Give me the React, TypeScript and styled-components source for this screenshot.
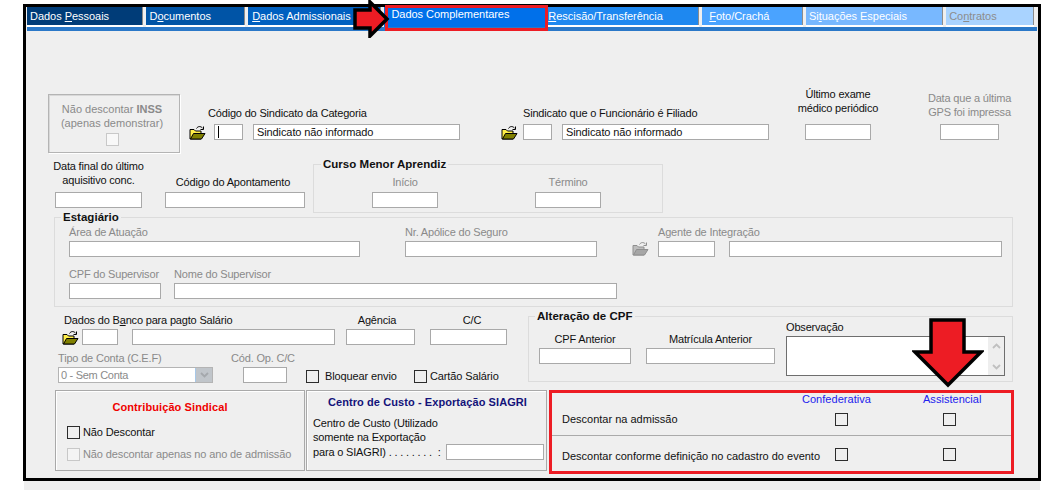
import React from 'react';
import styled, { createGlobalStyle } from 'styled-components';

const GlobalStyle = createGlobalStyle`
  html, body {
    margin: 0;
    padding: 0;
    background: #fff;
    overflow: hidden;
  }

  body {
    font-family: "Liberation Sans", Arial, sans-serif;
    font-size: 11px;
    letter-spacing: -0.1px;
    color: #111;
  }
`;

const Page = styled.div`
  position: relative;
  width: 1061px;
  height: 490px;
  padding: 4px 0 0 23px;
  box-sizing: border-box;
`;

const Win = styled.div`
  box-sizing: border-box;
  width: 1018px;
  height: 477px;
  border: 3px solid #000;
  background: #efefef;
`;

const BelowStrip = styled.div`
  width: 1016px;
  height: 9px;
  margin-left: 1px;
  background: #efefef;
`;

const TabBar = styled.div`
  display: flex;
  height: 24px;
  box-sizing: border-box;
  width: 1010px;
  margin-left: 1px;
  border-bottom: 4px solid #2a78c8;
`;

const Tab = styled.div<{ $w: number; $bg: string; $fg?: string; $pl?: number; $active?: boolean; }>`
  box-sizing: border-box;
  width: ${({ $w, }) => $w}px;
  margin-right: ${({ $active, }) => ($active ? 0 : 3)}px;
  height: ${({ $active, }) => ($active ? 20 : 18)}px;
  padding: ${({ $active, }) => ($active ? 0 : 2)}px 0 0 ${({ $pl, }) => $pl ?? 3}px;
  background: ${({ $bg, }) => $bg};
  color: ${({ $fg, }) => $fg || '#fff'};
  line-height: 14px;
  letter-spacing: -0.03px;
  white-space: nowrap;
  border-right: ${({ $active, }) => ($active ? 'none' : '1px solid #8c8c8c')};
  box-shadow: ${({ $active, }) => ($active ? 'none' : '0 2px 0 #fff')};
`;

const ActiveTabFrame = styled.div`
  position: absolute;
  left: 385px;
  top: 5px;
  width: 163px;
  height: 26px;
  box-sizing: border-box;
  border: 3px solid #ed1c24;
`;

const Row = styled.div<{ $top?: number; $h?: number; $start?: boolean; }>`
  display: flex;
  align-items: ${({ $start, }) => ($start ? 'flex-start' : 'flex-end')};
  margin-top: ${({ $top, }) => $top || 0}px;
  height: ${({ $h, }) => ($h ? `${$h}px` : 'auto')};
`;

const Form = styled.div`
  padding-left: 22px;
`;

const Field = styled.div<{ $w?: number; $ml?: number; $mb?: number; $center?: boolean; }>`
  display: flex;
  flex-direction: column;
  align-items: ${({ $center, }) => ($center ? 'center' : 'flex-start')};
  flex: none;
  width: ${({ $w, }) => ($w ? `${$w}px` : 'auto')};
  margin-left: ${({ $ml, }) => $ml || 0}px;
  margin-bottom: ${({ $mb, }) => $mb || 0}px;
`;

const Label = styled.div<{ $gap?: number; $ml?: number; $muted?: boolean; }>`
  line-height: 14px;
  letter-spacing: -0.18px;
  white-space: nowrap;
  text-align: center;
  margin-left: ${({ $ml, }) => $ml || 0}px;
  margin-bottom: ${({ $gap, }) => $gap ?? 3}px;
  color: ${({ $muted, }) => ($muted ? '#8a8a8a' : '#111')};
`;

const Input = styled.div<{ $w?: number; $ml?: number; }>`
  box-sizing: border-box;
  flex: none;
  position: relative;
  width: ${({ $w, }) => ($w ? `${$w}px` : '100%')};
  height: 16px;
  margin-left: ${({ $ml, }) => $ml || 0}px;
  padding-left: 3px;
  background: #fff;
  border: 1px solid #a9a9a9;
  line-height: 14px;
  white-space: nowrap;
`;

const Caret = styled.span`
  position: absolute;
  left: 3px;
  top: 1px;
  width: 1px;
  height: 12px;
  background: #000;
`;

const InputRow = styled.div`
  display: flex;
  align-items: center;
`;

const InssBox = styled.div`
  box-sizing: border-box;
  flex: none;
  width: 132px;
  height: 59px;
  padding: 7px 4px 0 0;
  border: 1px solid #b4b4b4;
  box-shadow: inset 1px 1px 0 #d8d8d8, 1px 1px 0 #fff;
  text-align: center;
  color: #8a8a8a;
  line-height: 14px;
  letter-spacing: 0;
`;

const InssCheck = styled.div`
  box-sizing: border-box;
  width: 13px;
  height: 13px;
  margin: 3px auto 0;
  background: #f8f8f8;
  border: 1px solid #c8c8c8;
`;

const Group = styled.fieldset<{ $w: number; $ml?: number; $top?: number; $pb?: number; }>`
  box-sizing: border-box;
  flex: none;
  display: block;
  width: ${({ $w, }) => $w}px;
  min-width: 0;
  margin: ${({ $top, }) => $top || 0}px 0 0 ${({ $ml, }) => $ml || 0}px;
  padding: 0 0 ${({ $pb, }) => $pb || 0}px 0;
  border: 1px solid #dcdcdc;
`;

const GroupTitle = styled.legend<{ $ml: number; }>`
  margin-left: ${({ $ml, }) => $ml}px;
  padding: 0 2px;
  font-weight: bold;
  font-size: 11.5px;
  line-height: 14px;
  letter-spacing: 0.02px;
  color: #111;
`;

const LeftColumn = styled.div`
  flex: none;
  width: 480px;
  padding-top: 4px;
`;

const BottomRow = styled.div`
  display: flex;
  align-items: flex-start;
  margin-top: 7px;
`;

const Select = styled.div`
  box-sizing: border-box;
  display: flex;
  width: 155px;
  height: 16px;
  background: #fff;
  border: 1px solid #b4b4b4;
  color: #8a8a8a;
  line-height: 14px;
  letter-spacing: -0.3px;
  padding-left: 2px;
`;

const SelectValue = styled.span`
  flex: 1;
`;

const SelectButton = styled.span`
  display: flex;
  align-items: center;
  justify-content: center;
  width: 16px;
  background: #c0c5ca;
  border-left: 1px solid #a7c8e8;
`;

const Check = styled.div<{ $w?: number; $ml?: number; $gap: number; $muted?: boolean; }>`
  display: flex;
  align-items: center;
  flex: none;
  width: ${({ $w, }) => ($w ? `${$w}px` : 'auto')};
  margin-left: ${({ $ml, }) => $ml || 0}px;
  gap: ${({ $gap, }) => $gap}px;
  line-height: 14px;
  letter-spacing: -0.12px;
  white-space: nowrap;
  color: ${({ $muted, }) => ($muted ? '#8a8a8a' : '#111')};
`;

const Box = styled.span<{ $muted?: boolean; $ml?: number; }>`
  box-sizing: border-box;
  flex: none;
  width: 13px;
  height: 13px;
  margin-left: ${({ $ml, }) => $ml || 0}px;
  background: ${({ $muted, }) => ($muted ? '#f4f4f4' : 'transparent')};
  border: 1px solid ${({ $muted, }) => ($muted ? '#c8c8c8' : '#2c2c2c')};
`;

const Memo = styled.div`
  box-sizing: border-box;
  display: flex;
  justify-content: flex-end;
  width: 219px;
  height: 40px;
  background: #fff;
  border: 1px solid #6e6e6e;
`;

const MemoScroll = styled.div`
  display: flex;
  flex-direction: column;
  align-items: center;
  justify-content: space-between;
  width: 16px;
  padding: 6px 0 5px;
  box-sizing: border-box;
  background: #eeeeee;
`;

const Panel = styled.div<{ $w: number; $ml?: number; }>`
  box-sizing: border-box;
  flex: none;
  width: ${({ $w, }) => $w}px;
  height: 81px;
  margin-left: ${({ $ml, }) => $ml || 0}px;
  border: 1px solid #a9a9a9;
  box-shadow: inset 1px 1px 0 #fff;
`;

const SindicalTitle = styled.div`
  margin: 9px 0 0 -20px;
  text-align: center;
  font-weight: bold;
  line-height: 14px;
  letter-spacing: 0.1px;
  color: #f00000;
`;

const SindicalChecks = styled.div`
  display: flex;
  flex-direction: column;
  gap: 8px;
  margin: 11px 0 0 11px;
`;

const CostTitle = styled.div`
  margin: 4px 0 0 21px;
  font-weight: bold;
  line-height: 14px;
  letter-spacing: 0.08px;
  white-space: nowrap;
  color: #13137a;
`;

const CostText = styled.div`
  margin: 7px 0 0 6px;
  line-height: 14px;
  letter-spacing: -0.17px;
  white-space: nowrap;
`;

const CostLastLine = styled.div`
  display: flex;
  align-items: center;
  justify-content: space-between;
  width: 231px;
`;

const DiscountPanel = styled.div`
  box-sizing: border-box;
  flex: none;
  width: 465px;
  height: 84px;
  margin-left: 2px;
  border: 3px solid #ed1c24;
`;

const DiscountHeader = styled.div`
  display: flex;
  height: 13px;
  padding-left: 250px;
  color: #2222ee;
  line-height: 13px;
  letter-spacing: 0.03px;
`;

const HeaderCell = styled.span<{ $w?: number; }>`
  flex: none;
  width: ${({ $w, }) => ($w ? `${$w}px` : 'auto')};
`;

const DiscountRow = styled.div<{ $divider?: boolean; }>`
  display: flex;
  align-items: center;
  box-sizing: border-box;
  height: ${({ $divider, }) => ($divider ? 36 : 29)}px;
  padding: ${({ $divider, }) => ($divider ? '2px 0 0 10px' : '0 0 2px 10px')};
  border-top: ${({ $divider, }) => ($divider ? '1px solid #aaa' : 'none')};
`;

const DiscountLabel = styled.span<{ $drop?: number; }>`
  flex: none;
  width: 273px;
  white-space: nowrap;
  letter-spacing: 0;
  position: relative;
  top: ${({ $drop, }) => $drop || 0}px;
`;

const Arrow = styled.svg<{ $x: number; $y: number; }>`
  position: absolute;
  left: ${({ $x, }) => $x}px;
  top: ${({ $y, }) => $y}px;
`;

const FolderSvg = styled.svg`
  flex: none;
`;

const TABS = [
  { w: 118, bg: '#003c78', pl: 3, label: <>Dados <u>P</u>essoais</>, },
  { w: 100, bg: '#0054a6', pl: 3, label: <>D<u>o</u>cumentos</>, },
  { w: 135, bg: '#0060c0', pl: 4, label: <><u>D</u>ados Admissionais</>, },
];

const LATER_TABS = [
  { w: 155, bg: '#1e88f0', pl: 2, label: <><u>R</u>escisão/Transferência</>, },
  { w: 102, bg: '#4aa3ff', pl: 7, label: <><u>F</u>oto/Crachá</>, },
  { w: 139, bg: '#78b8ff', pl: 3, label: <>Si<u>t</u>uações Especiais</>, },
  { w: 89, bg: '#a9d3ff', pl: 3, fg: '#8c8c8c', label: <>Co<u>n</u>tratos</>, },
];

function FolderIcon({ muted = false, }: { muted?: boolean; }) {
  const back = muted ? '#bdbdbd' : '#ffef4a';
  const front = muted ? '#a6a6a6' : '#808000';
  const line = muted ? '#8f8f8f' : '#000';

  return (
    <FolderSvg width='17' height='15' viewBox='0 0 17 15'>
      <path d='M1 4.5 L5 4.5 L6.5 6 L12 6 L12 14 L1 14 Z' fill={back} stroke={line} strokeWidth='1' />
      <path d='M1.5 14 L4.5 8.5 L16 8.5 L12.5 14 Z' fill={front} stroke={line} strokeWidth='1' />
      <path d='M7.5 3.5 C9 1 11.5 1 13.5 3' fill='none' stroke={line} strokeWidth='1' />
      <path d='M11.5 4.5 L14.5 4.5 L14.5 1.5' fill='none' stroke={line} strokeWidth='1' />
    </FolderSvg>
  );
}

function Chevron({ up = false, color = '#c0c0c0', }: { up?: boolean; color?: string; }) {
  return (
    <svg width='9' height='6' viewBox='0 0 9 6'>
      <path d={up ? 'M1 5 L4.5 1.5 L8 5' : 'M1 1 L4.5 4.5 L8 1'} fill='none' stroke={color} strokeWidth='1.8' />
    </svg>
  );
}

export default function App() {
  return (
    <>
      <GlobalStyle />
      <Page>
        <Win>
          <TabBar>
            {TABS.map((tab) => (
              <Tab key={tab.w} $w={tab.w} $bg={tab.bg} $pl={tab.pl}>{tab.label}</Tab>
            ))}
            <Tab $w={164} $bg='#0070ea' $pl={7} $active>Dados Complementares</Tab>
            {LATER_TABS.map((tab) => (
              <Tab key={tab.w} $w={tab.w} $bg={tab.bg} $fg={tab.fg} $pl={tab.pl}>{tab.label}</Tab>
            ))}
          </TabBar>

          <Form>
            <Row $top={57} $h={65}>
              <InssBox>
                Não descontar <b>INSS</b>
                <br />
                (apenas demonstrar)
                <InssCheck />
              </InssBox>
              <Field $ml={9} $mb={13}>
                <Label $ml={19} $gap={4}>Código do Sindicato da Categoria</Label>
                <InputRow>
                  <FolderIcon />
                  <Input $w={29} $ml={8}><Caret /></Input>
                  <Input $w={207} $ml={10}>Sindicato não informado</Input>
                </InputRow>
              </Field>
              <Field $ml={41} $mb={13}>
                <Label $ml={22} $gap={4}>Sindicato que o Funcionário é Filiado</Label>
                <InputRow>
                  <FolderIcon />
                  <Input $w={29} $ml={5}></Input>
                  <Input $w={207} $ml={10}>Sindicato não informado</Input>
                </InputRow>
              </Field>
              <Field $w={66} $ml={36} $mb={13} $center>
                <Label $gap={9}>Último exame<br />médico periódico</Label>
                <Input />
              </Field>
              <Field $w={59} $ml={69} $mb={13} $center>
                <Label $gap={5} $muted>Data que a última<br />GPS foi impressa</Label>
                <Input />
              </Field>
            </Row>

            <Row $top={4}>
              <Field $w={87} $ml={7} $mb={5} $center>
                <Label $gap={5}>Data final do último<br />aquisitivo conc.</Label>
                <Input />
              </Field>
              <Field $w={140} $ml={23} $mb={5} $center>
                <Label $ml={-4}>Código do Apontamento</Label>
                <Input />
              </Field>
              <Group $w={350} $ml={8} $pb={4}>
                <GroupTitle $ml={7}>Curso Menor Aprendiz</GroupTitle>
                <Row $h={37}>
                  <Field $w={66} $ml={58} $mb={0} $center>
                    <Label $muted>Início</Label>
                    <Input />
                  </Field>
                  <Field $w={66} $ml={97} $center>
                    <Label $muted>Término</Label>
                    <Input />
                  </Field>
                </Row>
              </Group>
            </Row>

            <Group $w={959} $ml={6} $top={-3} $pb={7}>
              <GroupTitle $ml={6}>Estagiário</GroupTitle>
              <Row $top={1}>
                <Field $w={291} $ml={14}>
                  <Label $gap={2} $muted>Área de Atuação</Label>
                  <Input />
                </Field>
                <Field $w={192} $ml={45}>
                  <Label $gap={2} $muted>Nr. Apólice do Seguro</Label>
                  <Input />
                </Field>
                <Field $ml={35} $mb={1}><FolderIcon muted /></Field>
                <Field $w={57} $ml={9}>
                  <Label $gap={2} $muted>Agente de Integração</Label>
                  <Input />
                </Field>
                <Input $w={273} $ml={14} />
              </Row>
              <Row $top={10}>
                <Field $w={92} $ml={14}>
                  <Label $gap={2} $muted>CPF do Supervisor</Label>
                  <Input />
                </Field>
                <Field $w={443} $ml={13}>
                  <Label $gap={2} $muted>Nome do Supervisor</Label>
                  <Input />
                </Field>
              </Row>
            </Group>

            <Row $top={2} $start>
              <LeftColumn>
                <Row>
                  <Field $ml={14}>
                    <Label $ml={2} $gap={2}>Dados do B<u>a</u>nco para pagto Salário</Label>
                    <InputRow>
                      <FolderIcon />
                      <Input $w={36} $ml={3} />
                      <Input $w={203} $ml={14} />
                    </InputRow>
                  </Field>
                  <Field $w={69} $ml={11} $center>
                    <Label $ml={-7} $gap={2}>Agência</Label>
                    <Input />
                  </Field>
                  <Field $w={77} $ml={15} $center>
                    <Label $ml={7} $gap={2}>C/C</Label>
                    <Input />
                  </Field>
                </Row>
                <Row $top={6}>
                  <Field $ml={10} $w={155}>
                    <Label $gap={2} $muted>Tipo de Conta (C.E.F)</Label>
                    <Select>
                      <SelectValue>0 - Sem Conta</SelectValue>
                      <SelectButton><Chevron color='#a4a8ac' /></SelectButton>
                    </Select>
                  </Field>
                  <Field $ml={18} $w={62}>
                    <Label $gap={2} $muted>Cód. Op. C/C</Label>
                    <Input $w={44} $ml={12} />
                  </Field>
                  <Check $w={108} $ml={13} $gap={6}><Box />Bloquear envio</Check>
                  <Check $gap={3}><Box />Cartão Salário</Check>
                </Row>
              </LeftColumn>
              <Group $w={485} $pb={5}>
                <GroupTitle $ml={6}>Alteração de CPF</GroupTitle>
                <Row $h={53}>
                  <Field $w={92} $ml={10} $mb={12} $center>
                    <Label $gap={2}>CPF Anterior</Label>
                    <Input />
                  </Field>
                  <Field $w={129} $ml={15} $mb={12} $center>
                    <Label $gap={2}>Matrícula Anterior</Label>
                    <Input />
                  </Field>
                  <Field $w={219} $ml={11}>
                    <Label $gap={2}>Observação</Label>
                    <Memo>
                      <MemoScroll>
                        <Chevron up />
                        <Chevron />
                      </MemoScroll>
                    </Memo>
                  </Field>
                </Row>
              </Group>
            </Row>

            <BottomRow>
              <Panel $w={250} $ml={7}>
                <SindicalTitle>Contribuição Sindical</SindicalTitle>
                <SindicalChecks>
                  <Check $gap={3}><Box />Não Descontar</Check>
                  <Check $gap={3} $muted><Box $muted />Não descontar apenas no ano de admissão</Check>
                </SindicalChecks>
              </Panel>
              <Panel $w={241} $ml={1}>
                <CostTitle>Centro de Custo - Exportação SIAGRI</CostTitle>
                <CostText>
                  Centro de Custo (Utilizado
                  <br />
                  somente na Exportação
                  <CostLastLine>
                    <span>para o SIAGRI) . . . . . . . . &nbsp;:</span>
                    <Input $w={98} />
                  </CostLastLine>
                </CostText>
              </Panel>
              <DiscountPanel>
                <DiscountHeader>
                  <HeaderCell $w={121}>Confederativa</HeaderCell>
                  <HeaderCell>Assistencial</HeaderCell>
                </DiscountHeader>
                <DiscountRow>
                  <DiscountLabel $drop={-1}>Descontar na admissão</DiscountLabel>
                  <Box />
                  <Box $ml={95} />
                </DiscountRow>
                <DiscountRow $divider>
                  <DiscountLabel $drop={1}>Descontar conforme definição no cadastro do evento</DiscountLabel>
                  <Box />
                  <Box $ml={95} />
                </DiscountRow>
              </DiscountPanel>
            </BottomRow>
          </Form>
        </Win>
        <BelowStrip />

        <ActiveTabFrame />
        <Arrow $x={353} $y={0} width='37' height='38' viewBox='0 0 37 38'>
          <path d='M2 10 L17 10 L17 2 L34 19 L17 36 L17 28 L2 28 Z' fill='#ed1c24' stroke='#000' strokeWidth='3.5' />
        </Arrow>
        <Arrow $x={912} $y={318} width='72' height='70' viewBox='0 0 72 70'>
          <path d='M19 2 L52 2 L52 34 L69 34 L36 67 L3 34 L19 34 Z' fill='#ed1c24' stroke='#000' strokeWidth='3.5' />
        </Arrow>
      </Page>
    </>
  );
}
